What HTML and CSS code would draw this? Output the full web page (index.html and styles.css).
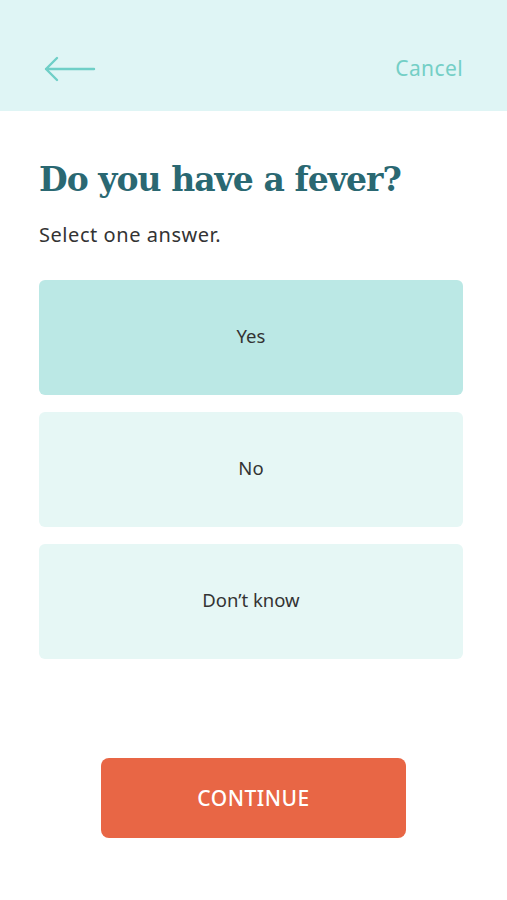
FILE: index.html
```html
<!DOCTYPE html>
<html>
<head>
<meta charset="utf-8">
<link rel="stylesheet" href="styles.css">
</head>
<body>
<header class="topbar">
  <svg class="back" width="52" height="26" viewBox="0 0 52 26">
    <path d="M2 13 H50 M13 2 L2 13 L13 24" fill="none" stroke="#6fcfc7" stroke-width="2.4" stroke-linecap="round" stroke-linejoin="round"/>
  </svg>
  <span class="cancel">Cancel</span>
</header>
<main class="content">
  <h1 class="title">Do you have a fever?</h1>
  <p class="hint">Select one answer.</p>
  <div class="options">
    <div class="option selected">Yes</div>
    <div class="option">No</div>
    <div class="option">Don’t know</div>
  </div>
  <div class="actions">
    <button class="continue">CONTINUE</button>
  </div>
</main>
</body>
</html>
```
FILE: styles.css
```css
* { box-sizing: border-box; }
html, body { margin: 0; padding: 0; background: #fff; }
body { font-family: "Noto Sans", "Open Sans", sans-serif; color: #333; }
.topbar {
  height: 111px;
  background: #dff5f5;
  display: flex;
  align-items: flex-end;
  justify-content: space-between;
  padding: 0 44px 29px 44px;
}
.back { display: block; margin-bottom: 0; }
.cancel { color: #74cfc6; font-size: 21px; line-height: 28px; letter-spacing: 0.4px; }
.content { padding: 0 44px 0 39px; }
.title {
  margin: 48px 0 0 0;
  font-family: "DejaVu Serif", serif;
  font-weight: bold;
  font-size: 33px;
  line-height: 42px;
  color: #2a6872;
  letter-spacing: -0.95px;
}
.hint { margin: 21px 0 0 0; font-size: 20px; line-height: 26px; color: #333; letter-spacing: 0.55px; }
.options { margin-top: 32px; display: flex; flex-direction: column; gap: 17px; }
.option {
  height: 115px;
  border-radius: 6px;
  background: #e6f7f5;
  display: flex; align-items: center; justify-content: center;
  padding-bottom: 4px;
  font-size: 18.5px; color: #333;
}
.option.selected { background: #bbe8e5; }
.actions { display: flex; justify-content: center; margin-top: 99px; padding-left: 5px; }
.continue {
  width: 305px; height: 80px;
  border: none; border-radius: 8px;
  background: #e86645; color: #fff;
  font-family: "Noto Sans", sans-serif; font-size: 21px; font-weight: 500;
  letter-spacing: 0.5px;
}
```
